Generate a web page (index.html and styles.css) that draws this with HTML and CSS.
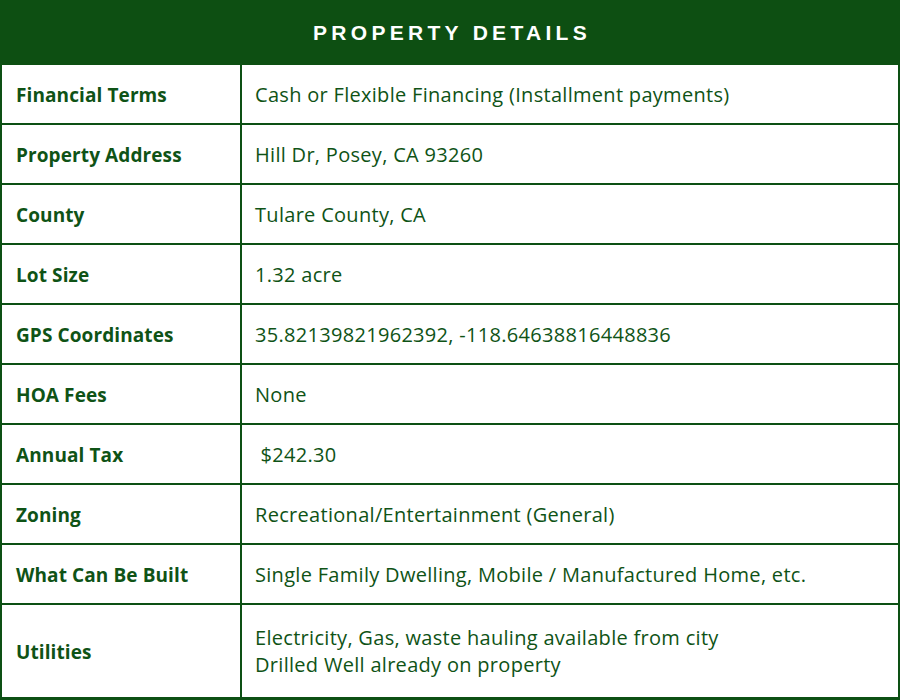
FILE: index.html
```html
<!DOCTYPE html>
<html>
<head>
<meta charset="utf-8">
<link rel="stylesheet" href="styles.css">
</head>
<body>
<div class="card">
  <div class="header">PROPERTY DETAILS</div>
  <div class="table">
    <div class="row"><div class="label">Financial Terms</div><div class="value">Cash or Flexible Financing (Installment payments)</div></div>
    <div class="row"><div class="label">Property Address</div><div class="value">Hill Dr, Posey, CA 93260</div></div>
    <div class="row"><div class="label">County</div><div class="value">Tulare County, CA</div></div>
    <div class="row"><div class="label">Lot Size</div><div class="value">1.32 acre</div></div>
    <div class="row"><div class="label">GPS Coordinates</div><div class="value">35.82139821962392, -118.64638816448836</div></div>
    <div class="row"><div class="label">HOA Fees</div><div class="value">None</div></div>
    <div class="row"><div class="label">Annual Tax</div><div class="value">&nbsp;$242.30</div></div>
    <div class="row"><div class="label">Zoning</div><div class="value">Recreational/Entertainment (General)</div></div>
    <div class="row"><div class="label">What Can Be Built</div><div class="value">Single Family Dwelling, Mobile / Manufactured Home, etc.</div></div>
    <div class="row last"><div class="label">Utilities</div><div class="value">Electricity, Gas, waste hauling available from city<br>Drilled Well already on property</div></div>
  </div>
</div>
</body>
</html>
```
FILE: styles.css
```css
html, body {
  margin: 0;
  padding: 0;
  background: #ffffff;
}
.card {
  width: 900px;
  height: 700px;
  display: flex;
  flex-direction: column;
  font-family: "Open Sans", "Liberation Sans", sans-serif;
  color: #0f5316;
}
.header {
  height: 65px;
  background: #0d4f12;
  color: #ffffff;
  display: flex;
  align-items: center;
  justify-content: center;
  font-family: "Liberation Sans", Arial, sans-serif;
  font-weight: 700;
  font-size: 21px;
  letter-spacing: 4.3px;
  padding-left: 4px;
  box-sizing: border-box;
}
.table {
  flex: 1;
  display: flex;
  flex-direction: column;
  border-left: 2px solid #0d5014;
  border-right: 2px solid #0d5014;
}
.row {
  height: 60px;
  box-sizing: border-box;
  border-bottom: 2px solid #0d5014;
  display: grid;
  grid-template-columns: 240px 1fr;
}
.row.last {
  flex: 1;
  border-bottom-width: 3px;
}
.label {
  display: flex;
  align-items: center;
  padding-left: 14px;
  padding-top: 2px;
  font-weight: 700;
  font-size: 19px;
  letter-spacing: 0.1px;
  border-right: 2px solid #0d5014;
}
.value {
  display: flex;
  align-items: center;
  padding-left: 13px;
  font-size: 20px;
  letter-spacing: 0.3px;
  line-height: 27px;
}
```
